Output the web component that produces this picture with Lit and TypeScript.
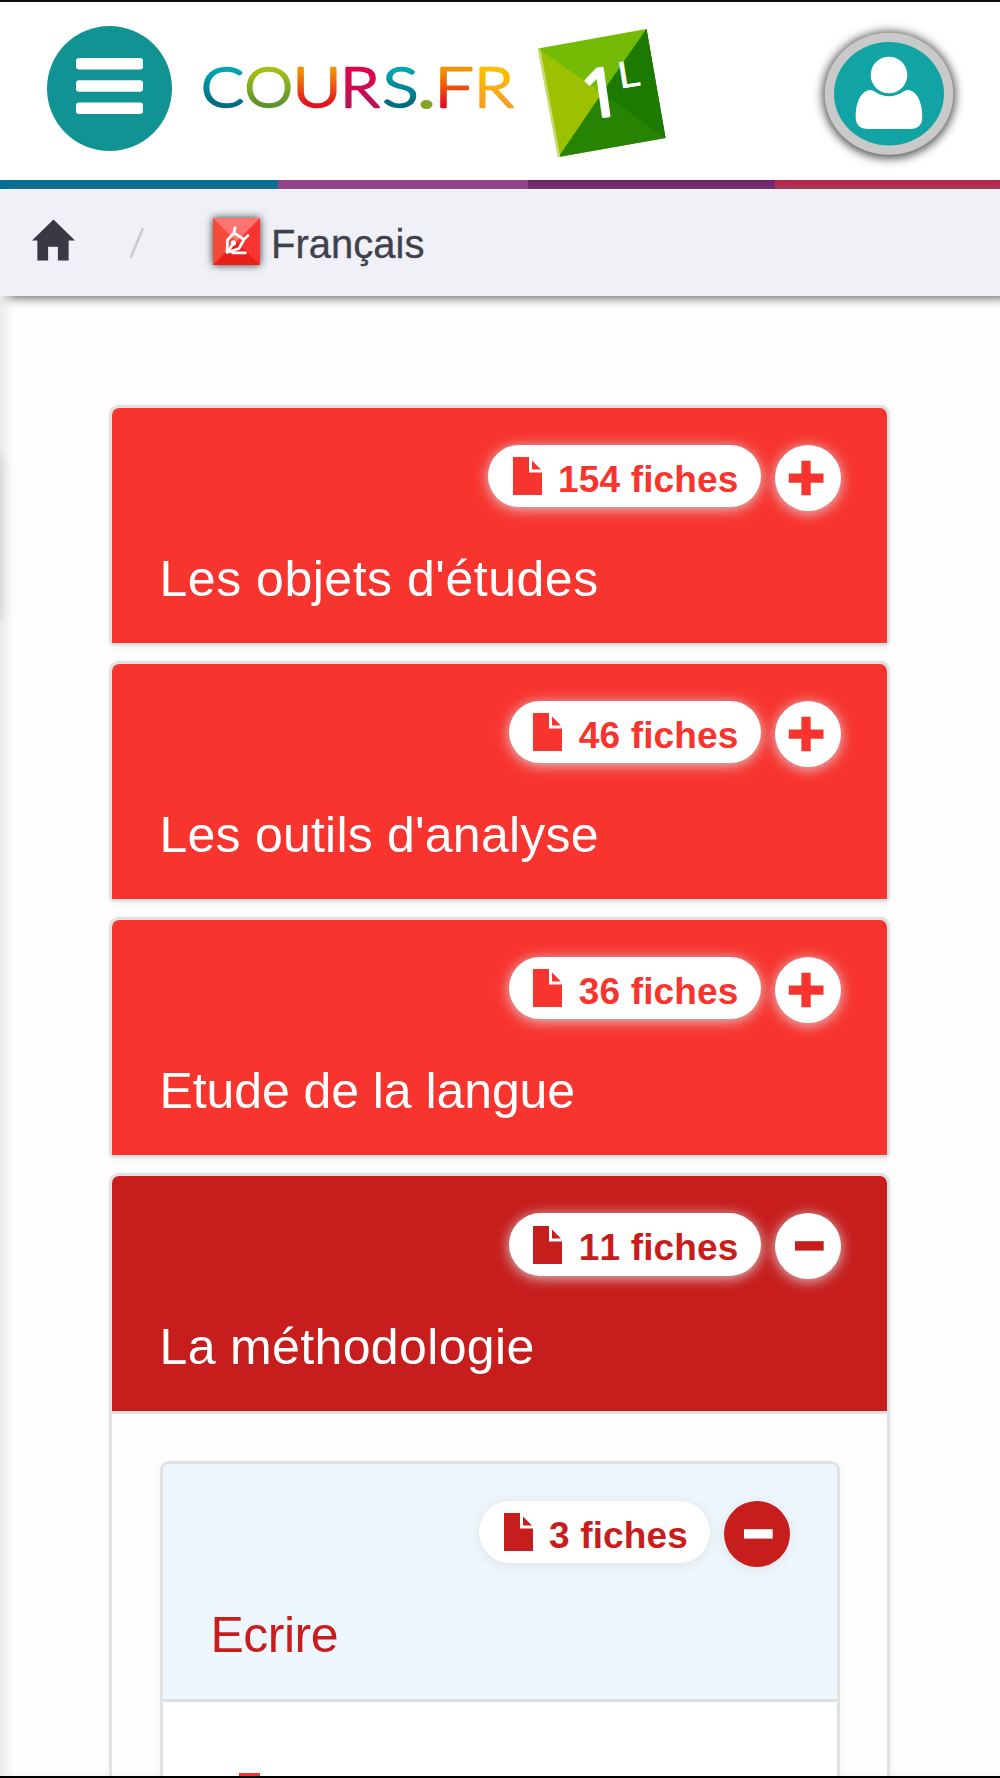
import { LitElement, html, css, svg, nothing } from "lit";
import { customElement, property } from "lit/decorators.js";
import { classMap } from "lit/directives/class-map.js";
import { styleMap } from "lit/directives/style-map.js";

const FONT = css`"Liberation Sans", Arial, sans-serif`;

@customElement("fiche-header")
class FicheHeader extends LitElement {
  @property() label = "";
  @property({ type: Number }) count = 0;
  @property({ type: Number }) tracking = 0;
  @property({ type: Boolean }) open = false;
  @property({ type: Boolean }) sub = false;

  static styles = css`
    :host { display: block; font-family: ${FONT}; }
    .head { box-sizing: border-box; height: 235px; padding: 37px 46.5px 0 47.5px; color: #fff; background: #f8342f; border-radius: 7px 7px 0 0; --ink: #f8342f; }
    .open { background: #c71d1d; --ink: #c71d1d; }
    .sub { background: #eff7fe; color: #c71d1d; }
    .row { display: flex; justify-content: flex-end; gap: 14px; height: 66px; }
    .pill { box-sizing: border-box; height: 62.5px; padding: 0 22px 0 24.5px; display: flex; gap: 16.5px; background: #fff; border-radius: 32px; color: var(--ink); box-shadow: 0 2px 14px rgba(221,232,234,.85); }
    .file { width: 29px; height: 38px; margin-top: 12.5px; fill: var(--ink); flex: none; }
    .count { font-size: 37px; font-weight: 700; line-height: 42px; margin-top: 14px; letter-spacing: .15px; font-kerning: none; white-space: nowrap; }
    .toggle { width: 66px; height: 66px; border-radius: 50%; background: #fff; fill: var(--ink); box-shadow: 0 2px 14px rgba(221,232,234,.85); }
    .sub .pill, .sub .toggle { box-shadow: 0 2px 14px #d9e2e5; }
    .sub .toggle { background: var(--ink); fill: #fff; }
    .title { margin: 40px 0 0; font-size: 50px; line-height: 56px; font-weight: 400; white-space: nowrap; }
  `;

  render() {
    return html`
      <div class=${classMap({ head: true, open: this.open, sub: this.sub })}>
        <div class="row">
          <div class="pill">
            <svg class="file" viewBox="0 0 29 38"><path d="M0 0H16V15.500H29V38H0Z M19 3.500L28 12.500H19Z" /></svg>
            <span class="count">${this.count} fiches</span>
          </div>
          <svg class="toggle" viewBox="0 0 66 66">
            ${this.open
              ? svg`<rect x="20" y="28.2" width="28.7" height="9.4" />`
              : svg`<path d="M26.4 15.700h9.300v12.900h12.800v9.200H35.700v12.500h-9.300V37.800H13.800v-9.200h12.600Z" />`}
          </svg>
        </div>
        <h2 class="title" style=${styleMap({ letterSpacing: `${this.tracking}px` })}>${this.label}</h2>
      </div>
    `;
  }
}

interface Chapter { label: string; count: number; tracking: number; open?: boolean }

const CHAPTERS: Chapter[] = [
  { label: "Les objets d'études", count: 154, tracking: 0.52 },
  { label: "Les outils d'analyse", count: 46, tracking: 0.22 },
  { label: "Etude de la langue", count: 36, tracking: -0.08 },
  { label: "La méthodologie", count: 11, tracking: 0.36, open: true },
];

/* letter, left edge, drawn advance, gradient */
const LETTERS: [string, number, number, string][] = [
  ["C", 0, 43, "teal"],
  ["O", 43.5, 48.5, "green"],
  ["U", 91.5, 49, "orange"],
  ["R", 139, 39.5, "pink"],
  ["S", 181.5, 36, "teal"],
  [".", 217, 17, "dot"],
  ["F", 233.5, 39, "orange"],
  ["R", 273, 39.5, "gold"],
];

@customElement("app-root")
class AppRoot extends LitElement {
  static styles = css`
    :host { display: block; font-family: ${FONT}; }
    .page { box-sizing: border-box; position: relative; width: 1000px; height: 1778px; overflow: hidden; background: #fefefe; border-top: 2px solid #0e0e0e; border-bottom: 2px solid #000; display: flex; flex-direction: column; }
    .top { height: 177.5px; flex: none; display: flex; align-items: flex-start; background: #fff; }
    .menu { width: 125px; height: 125px; margin: 24px 0 0 47px; }
    .logo { width: 320px; height: 60px; margin: 56px 0 0 29px; overflow: visible; }
    .level { width: 130px; height: 132px; margin: 27px 0 0 17px; }
    .user { width: 160px; height: 150px; margin: 16.5px 0 0 140.5px; overflow: visible; }
    .stripes { display: grid; grid-template-columns: 277.5px 250.5px 246.5px 1fr; height: 9.5px; flex: none; }
    .s1 { background: #007095; } .s2 { background: #993f8f; } .s3 { background: #72226c; } .s4 { background: #bc254d; }
    .crumbs { position: relative; z-index: 2; height: 106.5px; flex: none; display: flex; align-items: flex-start; background: #f0f1f7; box-shadow: 8px 2px 10px #666; }
    .home { width: 43px; height: 42px; margin: 30px 0 0 32px; fill: #393946; }
    .slash { width: 16px; height: 32px; margin: 38px 0 0 54px; }
    .subject { width: 47px; height: 47px; margin: 28.5px 0 0 67.5px; box-shadow: 0 0 8px #333; }
    .name { margin: 32px 0 0 11.5px; font-size: 40px; line-height: 46px; color: #41414e; -webkit-text-stroke: .3px #41414e; }
    .main { flex: 1; min-height: 0; padding: 109px 110px 0 109px; display: flex; flex-direction: column; gap: 15.2px; box-shadow: inset 10px 0 8px -2px #ececec; }
    .card { box-sizing: border-box; flex: none; border: 3px solid #dfe1e2; border-radius: 9px 9px 5px 5px; box-shadow: 0 2px 8px rgba(0,0,0,.06); }
    .tall { height: 700px; border-radius: 9px 9px 0 0; }
    .body { border-top: 3px solid #dddfe0; padding: 46.7px 47.5px 0 48px; }
    .inner { height: 500px; background: #fff; }
    .list { border-top: 3px solid #dddede; padding: 71px 0 0 76px; }
    .item { width: 21px; height: 20px; background: #f8342f; }
    .knob { position: absolute; left: -14px; top: 452px; width: 15px; height: 168px; border-radius: 6px; background: #ddd; box-shadow: 0 0 9px #ccc; }
  `;

  private icons() {
    return {
      menu: html`<svg class="menu" viewBox="0 0 125 125">
        <circle cx="62.5" cy="62.5" r="62.5" fill="#109392" />
        <g fill="#fff"><rect x="29" y="32" width="67" height="11.5" rx="3" /><rect x="29" y="54.3" width="67" height="11.5" rx="3" /><rect x="29" y="76.5" width="67" height="11.5" rx="3" /></g>
      </svg>`,
      level: html`<svg class="level" viewBox="0 0 130 132">
        <path d="M0 19.5L108.5 0L127.5 109L20.5 128Z" fill="#74bb06" />
        <path d="M0 19.5L64 64L20.5 128Z" fill="#9cc100" />
        <path d="M108.5 0L127.5 109L20.5 128L64 64Z" fill="#278302" />
        <path d="M108.5 0L127.5 109L64 64Z" fill="#1c7a00" />
        <path d="M1 19.5L21 128" stroke="#c8dc74" stroke-width="2.500" />
        <g fill="#fff" stroke="#fff" stroke-linejoin="round" font-family="Open Sans, sans-serif">
          <text transform="translate(47.500 90) rotate(-8)" font-size="67" stroke-width="3.200">1</text>
          <text transform="translate(81.500 59.500) rotate(-9)" font-size="36" stroke-width=".8" textLength="22" lengthAdjust="spacingAndGlyphs">L</text>
        </g>
      </svg>`,
      user: html`<svg class="user" viewBox="0 0 160 150">
        <defs><filter id="halo" x="-20%" y="-20%" width="140%" height="140%"><feGaussianBlur stdDeviation="5" /></filter></defs>
        <ellipse cx="80" cy="76" rx="66.500" ry="63.500" fill="#555" filter="url(#halo)" />
        <ellipse cx="80" cy="74.8" rx="64.3" ry="61" fill="#c9c9c9" />
        <ellipse cx="80" cy="74.8" rx="55" ry="51.7" fill="#12a3a4" />
        <path d="M61 71C52 72 46.700 83 46.700 98C46.700 106 51 110 59 110H101C109 110 113.300 106 113.300 98C113.300 83 108 72 99 71Q96 71 94.500 72.500Q80 82 65.500 72.500Q64 71 61 71Z" fill="#fff" />
        <circle cx="80" cy="56" r="20.500" fill="#12a3a4" />
        <circle cx="80" cy="56" r="18.300" fill="#fff" />
      </svg>`,
      subject: html`<svg class="subject" viewBox="0 0 47 47">
        <rect width="47" height="47" fill="#fb3431" />
        <path d="M0 0L23.5 23.5L0 47Z" fill="#f24b3a" /><path d="M0 0H47L23.5 23.5Z" fill="#fd7470" /><path d="M0 47L23.5 23.5L47 47Z" fill="#e91f18" />
        <g fill="none" stroke="#fff" stroke-width="2.700" stroke-linecap="round" stroke-linejoin="round">
          <path d="M22 9.500L21 15L31 21.500L35 17.500M21 15L14.500 22L14 34.500L26 30.500L30.500 22.500M14.500 34L20 26M19.500 34.800H32.500" />
          <circle cx="20.500" cy="25" r="1.300" />
        </g>
      </svg>`,
    };
  }

  private gradient(id: string, from: string, to: string) {
    return svg`<linearGradient id=${id} gradientUnits="userSpaceOnUse" x1="0" x2="0" y1="8" y2="50"><stop offset="0.1" stop-color=${from} /><stop offset="0.9" stop-color=${to} /></linearGradient>`;
  }

  render() {
    const icon = this.icons();
    return html`
      <div class="page">
        <header class="top">
          ${icon.menu}
          <svg class="logo" viewBox="0 0 320 60">
            <defs>
              ${this.gradient("teal", "#00a6b2", "#006c82")}
              ${this.gradient("green", "#a4c010", "#5f9332")}
              ${this.gradient("orange", "#f39200", "#e4121e")}
              ${this.gradient("pink", "#e3004b", "#b81458")}
              ${this.gradient("gold", "#fbbf00", "#f4a024")}
              ${this.gradient("dot", "#a4c010", "#83a524")}
            </defs>
            ${LETTERS.map(([c, x, w, g]) => svg`<text x=${x} y="49.3" font-family="Lato Light, Lato, sans-serif" font-size="55.5" font-weight="300" textLength=${w} lengthAdjust="spacingAndGlyphs" fill=${`url(#${g})`} stroke=${`url(#${g})`} stroke-width=${c === "." ? 4 : 2.4} stroke-linejoin="round">${c}</text>`)}
          </svg>
          ${icon.level}
          ${icon.user}
        </header>
        <div class="stripes"><i class="s1"></i><i class="s2"></i><i class="s3"></i><i class="s4"></i></div>
        <nav class="crumbs">
          <svg class="home" viewBox="0 0 44 42"><path d="M22 0L44 21.500H37.500V42H26.500V28H16.500V42H5.500V21.500H0Z" /></svg>
          <svg class="slash" viewBox="0 0 16 32"><path d="M1.500 31L14 1" stroke="#ccc" stroke-width="2.500" /></svg>
          ${icon.subject}
          <span class="name">Français</span>
        </nav>
        <main class="main">
          ${CHAPTERS.map((c) => html`
            <section class=${classMap({ card: true, tall: !!c.open })}>
              <fiche-header .label=${c.label} .count=${c.count} .tracking=${c.tracking} .open=${!!c.open}></fiche-header>
              ${c.open
                ? html`<div class="body">
                    <section class="card inner">
                      <fiche-header .label=${"Ecrire"} .count=${3} .tracking=${-0.5} .open=${true} .sub=${true}></fiche-header>
                      <div class="list"><div class="item"></div></div>
                    </section>
                  </div>`
                : nothing}
            </section>`)}
        </main>
        <div class="knob"></div>
      </div>
    `;
  }
}
